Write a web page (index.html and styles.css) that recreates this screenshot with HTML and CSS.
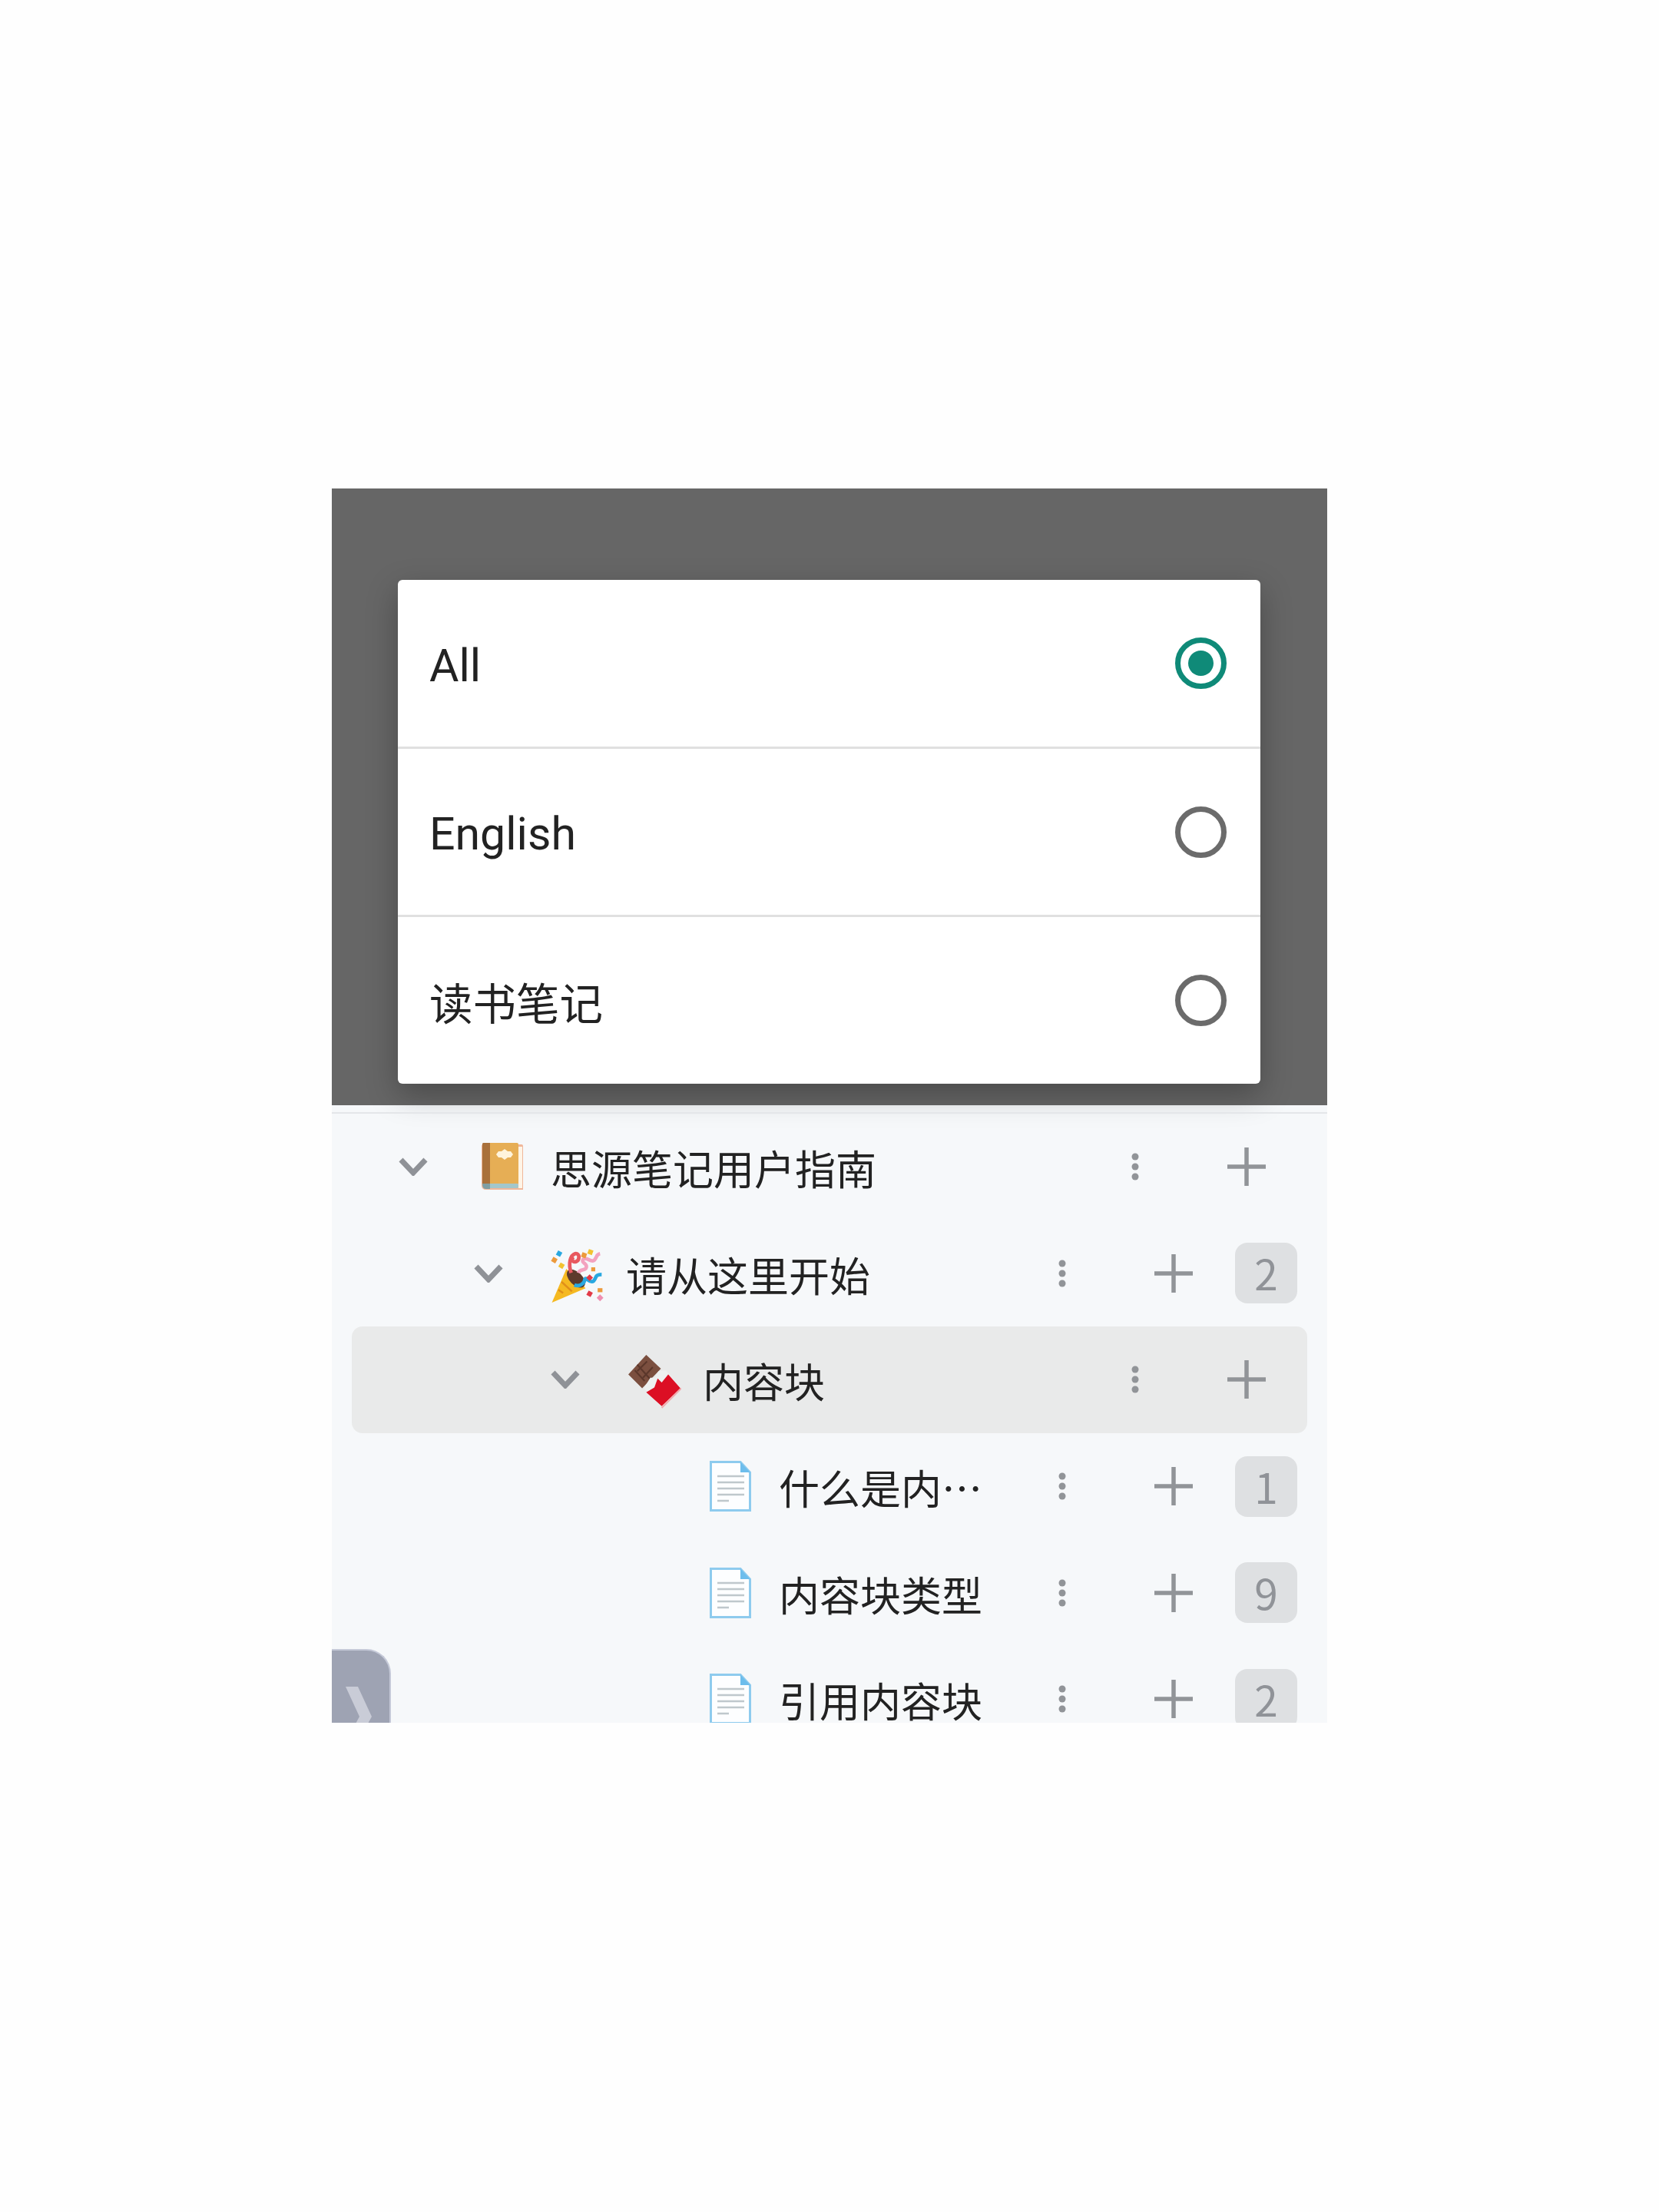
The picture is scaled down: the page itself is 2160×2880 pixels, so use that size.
FILE: index.html
```html
<!DOCTYPE html>
<html lang="zh-CN">
<head>
    <meta charset="UTF-8">
    <meta name="viewport" content="width=device-width, initial-scale=1.0">
    <title>思源笔记</title>
    <link rel="stylesheet" href="styles.css">
</head>
<body>

    <svg class="defs" width="0" height="0">
        <symbol id="chevron" viewBox="0 0 38 24">
            <path d="M3 3 L19 20 L35 3" fill="none" stroke="#8f9297" stroke-width="7"/>
        </symbol>
        <symbol id="dots" viewBox="0 0 10 36">
            <circle cx="5" cy="5" r="4.5" fill="#919498"/>
            <circle cx="5" cy="18" r="4.5" fill="#919498"/>
            <circle cx="5" cy="31" r="4.5" fill="#919498"/>
        </symbol>
        <symbol id="plus" viewBox="0 0 50 50">
            <path d="M25 0 V50 M0 25 H50" fill="none" stroke="#919498" stroke-width="5.5"/>
        </symbol>
        <symbol id="doc" viewBox="0 0 54 66">
            <path d="M1.5 1.5 H40 L52.5 15 V64.5 H1.5 Z" fill="#fdfeff" stroke="#8ecbee" stroke-width="3"/>
            <path d="M40 1.5 L52.5 15 H40 Z" fill="#6dbdec"/>
            <path d="M10 20 H45 M10 28 H45 M10 36 H45 M10 44 H45 M10 52 H25" fill="none" stroke="#bfc8cc" stroke-width="2.5"/>
        </symbol>
    </svg>

    <div class="screen">

        <!-- Filter dialog -->
        <div class="overlay">
            <div class="dialog">
                <div class="option">
                    <span class="option-label">All</span>
                    <span class="radio checked"></span>
                </div>
                <div class="option">
                    <span class="option-label">English</span>
                    <span class="radio"></span>
                </div>
                <div class="option">
                    <span class="option-label cjk">读书笔记</span>
                    <span class="radio"></span>
                </div>
            </div>
        </div>

        <!-- Doc tree -->
        <div class="tree">
            <div class="row depth-0 no-count">
                <svg class="chevron"><use href="#chevron"/></svg>
                <svg class="icon" viewBox="0 0 66 64">
                    <path d="M8 3 H58 Q60 3 60 5 V62 H12 Q6 62 6 56 V5 Q6 3 8 3 Z" fill="#f0b79a"/>
                    <rect x="54" y="6" width="5" height="54" fill="#fff4e6"/>
                    <path d="M8 1 H52 Q54 1 54 3 V54 H8 Z" fill="#e6ae55"/>
                    <path d="M8 1 H17 V54 H7 V2 Z" fill="#a9713c"/>
                    <rect x="8" y="54" width="46" height="6" rx="2" fill="#a3c7cb"/>
                    <path d="M7 55 Q7 61 12 61 H17 V54 H7 Z" fill="#7f9ea3"/>
                    <path d="M36 9 L40 12 H44 L47 16 L44 20 H40 L36 23 L32 20 H28 L25 16 L28 12 H32 Z" fill="#fff4dc"/>
                </svg>
                <span class="title">思源笔记用户指南</span>
                <svg class="dots"><use href="#dots"/></svg>
                <svg class="plus"><use href="#plus"/></svg>
            </div>

            <div class="row depth-1">
                <svg class="chevron"><use href="#chevron"/></svg>
                <svg class="icon large" viewBox="0 0 66 67">
                    <path d="M1 67 L19 25 L43 49 Z" fill="#f5b921"/>
                    <path d="M9 51 L15 55 M13 41 L26 53" fill="none" stroke="#e08f1a" stroke-width="2.5"/>
                    <ellipse cx="31" cy="37" rx="8" ry="14" transform="rotate(-45 31 37)" fill="#5d3a2c"/>
                    <path d="M25 30 C21 18 24 8 30 6 C36 5 36 14 31 16 C26 17 25 12 28 10" fill="none" stroke="#e8595f" stroke-width="4.5"/>
                    <path d="M34 30 C36 24 44 28 44 22 C44 17 37 18 40 13 C44 9 50 18 54 14 C58 9 56 7 61 6" fill="none" stroke="#f3a2bf" stroke-width="4.5"/>
                    <path d="M29 45 C36 48 42 42 42 38 C44 34 48 44 53 40 C57 36 54 32 63 32" fill="none" stroke="#29a8e0" stroke-width="4.5"/>
                    <rect x="7" y="3" width="6" height="6" fill="#29a8e0" transform="rotate(30 10 6)"/>
                    <rect x="1" y="11" width="6" height="6" fill="#ec9a3c" transform="rotate(30 4 14)"/>
                    <rect x="10" y="18" width="6" height="6" fill="#f2c230" transform="rotate(30 13 21)"/>
                    <rect x="38" y="5" width="6" height="6" fill="#ec9a3c" transform="rotate(20 41 8)"/>
                    <rect x="46" y="1" width="6" height="6" fill="#f2c230" transform="rotate(20 49 4)"/>
                    <rect x="50" y="23" width="5" height="5" fill="#ec9a3c"/>
                    <rect x="45" y="33" width="6" height="6" fill="#e23a48" transform="rotate(45 48 36)"/>
                    <rect x="45" y="53" width="6" height="6" fill="#e23a48" transform="rotate(30 48 56)"/>
                    <rect x="58" y="49" width="6" height="5" fill="#ec9a3c"/>
                    <rect x="58" y="58" width="6" height="6" fill="#ef8fb0" transform="rotate(45 61 61)"/>
                </svg>
                <span class="title">请从这里开始</span>
                <svg class="dots"><use href="#dots"/></svg>
                <svg class="plus"><use href="#plus"/></svg>
                <span class="count">2</span>
            </div>

            <div class="row depth-2 no-count selected">
                <svg class="chevron"><use href="#chevron"/></svg>
                <svg class="icon large" viewBox="0 0 66 66">
                    <path d="M23 0 L41 17 L18 41 L1 24 Z" fill="#7b4f3f"/>
                    <path d="M12 20 L24 8 M19 28 L31 15 M12 12 L28 30 M9 19 L21 32" fill="none" stroke="#5b372b" stroke-width="2"/>
                    <path d="M20 41 L28 28 L34 28 L38 20 L47 19 L54 27 L66 41 L43 65 Z" fill="#eef0f0"/>
                    <path d="M23 46 L33 40 L37 29 L42 34 L50 24 L65 41 L42 63 Z" fill="#dc0f24"/>
                    <path d="M42 65 L66 41" fill="none" stroke="#f2a9ad" stroke-width="2"/>
                </svg>
                <span class="title">内容块</span>
                <svg class="dots"><use href="#dots"/></svg>
                <svg class="plus"><use href="#plus"/></svg>
            </div>

            <div class="row depth-3">
                <span class="chevron"></span>
                <svg class="icon"><use href="#doc"/></svg>
                <span class="title">什么是内…</span>
                <svg class="dots"><use href="#dots"/></svg>
                <svg class="plus"><use href="#plus"/></svg>
                <span class="count">1</span>
            </div>

            <div class="row depth-3">
                <span class="chevron"></span>
                <svg class="icon"><use href="#doc"/></svg>
                <span class="title">内容块类型</span>
                <svg class="dots"><use href="#dots"/></svg>
                <svg class="plus"><use href="#plus"/></svg>
                <span class="count">9</span>
            </div>

            <div class="row depth-3">
                <span class="chevron"></span>
                <svg class="icon"><use href="#doc"/></svg>
                <span class="title">引用内容块</span>
                <svg class="dots"><use href="#dots"/></svg>
                <svg class="plus"><use href="#plus"/></svg>
                <span class="count">2</span>
            </div>
        </div>

        <!-- Sidebar handle -->
        <div class="handle">
            <svg width="76" height="96" viewBox="0 0 76 96">
                <path d="M18 49 H34 L52 88 L40 110 H24 L36 88 Z" fill="#c9ccd7"/>
            </svg>
        </div>
    </div>

</body>
</html>
```

FILE: styles.css
```css
* {
    box-sizing: border-box;
}
body {
    margin: 0;
    padding: 636px 0 0 432px;
    background-color: #fefefe;
    font-family: Roboto, "Noto Sans CJK SC", sans-serif;
}
.defs {
    display: block;
    height: 0;
}
.screen {
    position: relative;
    width: 1296px;
    height: 1607px;
    overflow: hidden;
    background-color: #f6f8fa;
}

/* dialog */
.overlay {
    height: 803px;
    padding: 119px 87px 0 86px;
    background-color: #666666;
}
.dialog {
    height: 656px;
    background: white;
    border-radius: 6px;
    box-shadow: 0 14px 40px rgba(0, 0, 0, 0.28);
}
.option {
    display: flex;
    align-items: center;
    justify-content: space-between;
    height: 220px;
    padding: 0 44px 0 41px;
    border-bottom: 3px solid #e0e0e0;
}
.option:nth-child(2) {
    height: 219px;
}
.option:last-child {
    border-bottom: none;
    height: 217px;
}
.option-label {
    padding-top: 5px;
    font-size: 59px;
    color: #222222;
}
.option-label.cjk {
    padding-top: 0;
    font-size: 56.5px;
}
.radio {
    width: 67px;
    height: 67px;
    border: 7px solid #6b6b6b;
    border-radius: 50%;
}
.radio.checked {
    border-color: #0f8a78;
    padding: 10px;
    background: #0f8a78 content-box;
}

/* tree */
.tree {
    margin-top: 9px;
    border-top: 2px solid #e4e6e9;
}
.row {
    display: flex;
    align-items: center;
    height: 138.6px;
    margin: 0 26px;
    padding-right: 13px;
    border-radius: 14px;
}
.row.no-count {
    padding-right: 54px;
}
.row.selected {
    background-color: #e9eaea;
}
.depth-0 {
    padding-left: 61px;
}
.depth-1 {
    padding-left: 159px;
}
.depth-2 {
    padding-left: 259px;
}
.depth-3 {
    padding-left: 358px;
}
.chevron {
    flex: none;
    width: 38px;
    height: 24px;
    margin-right: 64px;
}
.icon {
    flex: none;
    width: 66px;
    height: 66px;
    margin-right: 30px;
}
.icon.large {
    width: 70px;
    height: 70px;
    margin-top: 6px;
    margin-left: -2px;
    margin-right: 28px;
}
.title {
    flex: 1;
    padding-top: 2px;
    font-size: 53px;
    color: #222222;
    white-space: nowrap;
    font-family: "Noto Sans CJK SC", sans-serif;
}
.dots {
    flex: none;
    width: 10px;
    height: 36px;
}
.plus {
    flex: none;
    width: 50px;
    height: 50px;
    margin-left: 115px;
}
.count {
    flex: none;
    width: 81px;
    height: 79px;
    margin-left: 55px;
    background-color: #dee0e2;
    border-radius: 16px;
    color: #909398;
    font-family: "Noto Sans CJK SC", sans-serif;
    font-size: 55px;
    font-weight: 400;
    line-height: 76px;
    text-align: center;
}

/* handle sticking out at the bottom left */
.handle {
    position: absolute;
    left: 0;
    bottom: 0;
    width: 77px;
    height: 96px;
    background-color: #9ea3b3;
    border-top-right-radius: 32px;
    border: 2px solid #c5c9d8;
    border-left: none;
    border-bottom: none;
}
.handle svg {
    display: block;
    margin-top: -2px;
}
```
